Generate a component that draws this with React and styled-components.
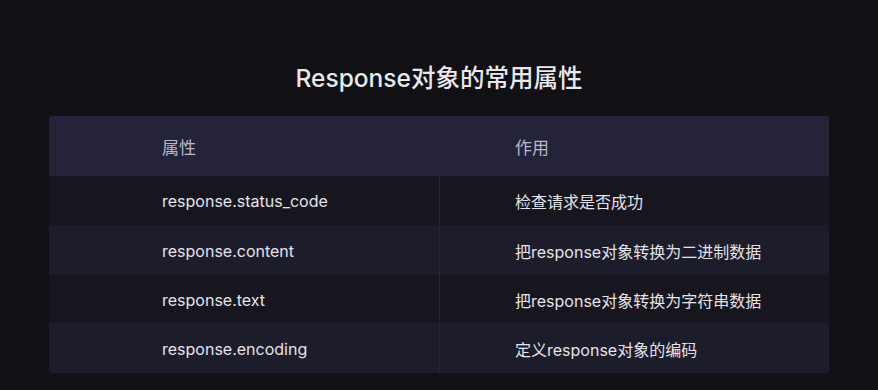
import React from 'react';
import styled, { createGlobalStyle } from 'styled-components';

const GlobalStyle = createGlobalStyle`
  html, body {
    margin: 0;
    padding: 0;
    background: #111015;
  }
  body {
    font-family: Inter, "Noto Sans CJK SC", sans-serif;
  }
`;

const Page = styled.div`
  width: 878px;
  height: 390px;
  box-sizing: border-box;
  padding: 62px 49px 0;
  background: #111015;
  display: flex;
  flex-direction: column;
  align-items: center;
`;

const Title = styled.h1`
  margin: 0 0 22px;
  font-size: 24.5px;
  line-height: 32px;
  font-weight: 500;
  color: #e9e8ee;
`;

const Table = styled.div`
  width: 780px;
  display: grid;
  grid-template-columns: 390px 390px;
  border-radius: 3px;
  overflow: hidden;
`;

const HeadCell = styled.div`
  height: 60px;
  display: flex;
  align-items: center;
  padding-left: ${(p) => p.$indent}px;
  background: #25233a;
  color: #b9b7c8;
  font-size: 17px;
`;

const Cell = styled.div`
  height: ${(p) => p.$h}px;
  display: flex;
  align-items: center;
  padding-left: ${(p) => p.$indent}px;
  background: ${(p) => (p.$even ? '#1d1c2a' : '#17161f')};
  color: #e4e3ea;
  font-size: 16px;
  padding-top: 1px;
  box-sizing: border-box;
  border-left: ${(p) => (p.$divider ? '1px solid #262536' : 'none')};
`;

const rows = [
  ['response.status_code', '检查请求是否成功', 49],
  ['response.content', '把response对象转换为二进制数据', 50],
  ['response.text', '把response对象转换为字符串数据', 48],
  ['response.encoding', '定义response对象的编码', 50],
];

export default function App() {
  return (
    <>
      <GlobalStyle />
      <Page>
        <Title>Response对象的常用属性</Title>
        <Table>
          <HeadCell $indent={113}>属性</HeadCell>
          <HeadCell $indent={76}>作用</HeadCell>
          {rows.map(([name, desc, h], i) => (
            <React.Fragment key={name}>
              <Cell $h={h} $indent={113} $even={i % 2 === 1}>{name}</Cell>
              <Cell $h={h} $indent={75} $even={i % 2 === 1} $divider>{desc}</Cell>
            </React.Fragment>
          ))}
        </Table>
      </Page>
    </>
  );
}
